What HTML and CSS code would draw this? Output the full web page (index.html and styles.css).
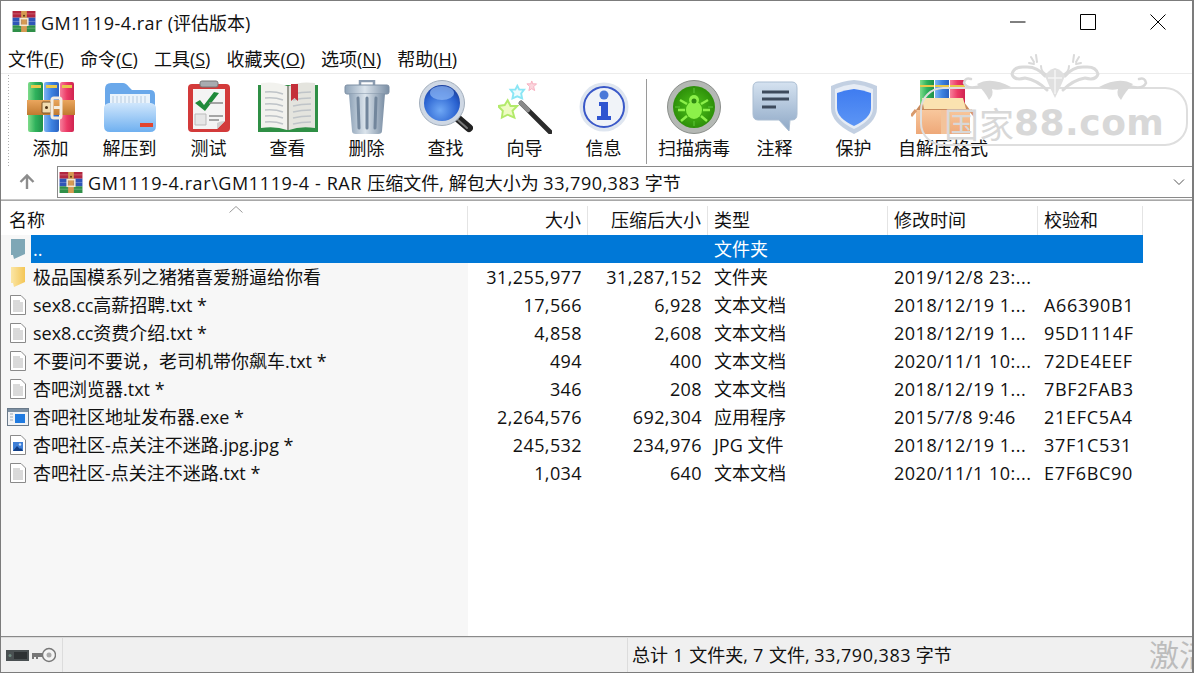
FILE: index.html
```html
<!DOCTYPE html>
<html lang="zh-CN">
<head>
    <meta charset="UTF-8">
    <title>GM1119-4.rar (评估版本)</title>
    <link rel="stylesheet" href="styles.css">
</head>
<body>
<svg class="icon-defs" xmlns="http://www.w3.org/2000/svg">
    <defs>
        <linearGradient id="g-green" x1="0" x2="1" y1="0" y2="0"><stop offset="0" stop-color="#7fdc8a"/><stop offset=".5" stop-color="#2fb25c"/><stop offset="1" stop-color="#1f8f48"/></linearGradient>
        <linearGradient id="g-blue" x1="0" x2="1" y1="0" y2="0"><stop offset="0" stop-color="#7fb4f2"/><stop offset=".5" stop-color="#3d83e2"/><stop offset="1" stop-color="#2a62c0"/></linearGradient>
        <linearGradient id="g-red" x1="0" x2="1" y1="0" y2="0"><stop offset="0" stop-color="#f67f9b"/><stop offset=".5" stop-color="#ec3a66"/><stop offset="1" stop-color="#cf2450"/></linearGradient>
        <linearGradient id="g-belt" x1="0" x2="0" y1="0" y2="1"><stop offset="0" stop-color="#eaa65e"/><stop offset="1" stop-color="#c07a30"/></linearGradient>
        <linearGradient id="g-folder" x1="0" x2="0" y1="0" y2="1"><stop offset="0" stop-color="#cfe6fc"/><stop offset="1" stop-color="#6fb0f0"/></linearGradient>
        <linearGradient id="g-steel" x1="0" x2="1" y1="0" y2="0"><stop offset="0" stop-color="#8fa3b8"/><stop offset=".45" stop-color="#dbe4ec"/><stop offset="1" stop-color="#7a8ea4"/></linearGradient>
        <radialGradient id="g-lens" cx=".45" cy=".7" r=".7"><stop offset="0" stop-color="#6fa8f5"/><stop offset=".7" stop-color="#2a62d0"/><stop offset="1" stop-color="#1b3f9c"/></radialGradient>
        <radialGradient id="g-bug" cx=".5" cy=".5" r=".55"><stop offset="0" stop-color="#4ec41a"/><stop offset="1" stop-color="#2a8a08"/></radialGradient>
        <linearGradient id="g-bubble" x1="0" x2="0" y1="0" y2="1"><stop offset="0" stop-color="#d5e2f0"/><stop offset="1" stop-color="#8ea8c6"/></linearGradient>
        <linearGradient id="g-shield" x1="0" x2="0" y1="0" y2="1"><stop offset="0" stop-color="#3f7cf0"/><stop offset="1" stop-color="#5c95f5"/></linearGradient>
        <linearGradient id="g-box" x1="0" x2="0" y1="0" y2="1"><stop offset="0" stop-color="#f8c79c"/><stop offset="1" stop-color="#eea878"/></linearGradient>
        <linearGradient id="g-yfolder" x1="0" x2="1" y1="0" y2="0"><stop offset="0" stop-color="#fbe6a6"/><stop offset="1" stop-color="#f4c656"/></linearGradient>
    </defs>
    <symbol id="ico-rar" viewBox="0 0 48 52">
        <rect x="1" y="1" width="15" height="50" rx="2" fill="url(#g-green)"/>
        <rect x="17" y="1" width="15" height="50" rx="2" fill="url(#g-blue)"/>
        <rect x="33" y="1" width="14" height="50" rx="2" fill="url(#g-red)"/>
        <path d="M4 4h10v3H4zM19 4h11v3H19zM35 4h10v3H35z" fill="#e9c84a"/>
        <rect x="0" y="19" width="48" height="15" fill="url(#g-belt)"/>
        <rect x="15" y="21" width="9" height="11" rx="1" fill="#f2dcb0" stroke="#7a5226"/>
        <circle cx="19.500" cy="26.500" r="1.500" fill="#4a2f12"/>
        <rect x="25" y="17" width="9" height="20" rx="2" fill="none" stroke="#f4ece0" stroke-width="3"/>
        <rect x="27" y="25" width="6" height="3" fill="#f4ece0"/>
    </symbol>
    <symbol id="ico-rar-small" viewBox="0 0 24 22">
        <rect y="0" width="24" height="7" fill="#b3263f"/>
        <rect y="7" width="24" height="8" fill="#2f55b8"/>
        <rect y="15" width="24" height="7" fill="#2f8f48"/>
        <path d="M0 3h24M0 11h24M0 18h24" stroke="#fff" stroke-opacity=".25"/>
        <rect x="9" y="0" width="6" height="22" fill="#d69a52"/>
        <rect x="8" y="8" width="8" height="7" fill="none" stroke="#f4e8d2" stroke-width="1.600"/>
        <circle cx="12" cy="5" r="1" fill="#4a2f12"/>
    </symbol>
    <symbol id="ico-extract" viewBox="0 0 54 52">
        <path d="M2 8q0-6 6-6h12q3 0 6 4l3 3h18q5 0 5 5v30H2z" fill="#6aa8ea"/>
        <rect x="7" y="13" width="40" height="20" fill="#eaf3fb"/>
        <path d="M10 15v8M14 15v8M18 15v8M22 15v8M26 15v8M30 15v8M34 15v8M38 15v8M42 15v8" stroke="#b6cbe0"/>
        <path d="M1 27q0-4 5-5h42q5 1 5 5v18q0 6-6 6H7q-6 0-6-6z" fill="url(#g-folder)"/>
        <rect x="37" y="42" width="13" height="4" fill="#e2452e"/>
    </symbol>
    <symbol id="ico-test" viewBox="0 0 44 52">
        <rect x="1" y="3" width="42" height="48" rx="4" fill="#d33a3a"/>
        <path d="M6 8h32v32l-8 8H6z" fill="#f4f4f4"/>
        <path d="M30 48l8-8q-5 0-8 2z" fill="#cfcfcf"/>
        <rect x="13" y="0" width="18" height="6" rx="2" fill="#a8acb0" stroke="#777"/>
        <path d="M8 22l5-3 4 5 10-13 5 1-14 18z" fill="#1f8a3a"/>
        <path d="M8 33h11v11H8z" fill="#e6e6e6" stroke="#bbb"/>
        <path d="M22 22h14M22 35h14M22 39h10" stroke="#8a8a8a" stroke-width="1.5"/>
    </symbol>
    <symbol id="ico-view" viewBox="0 0 60 50">
        <path d="M0 3h60v47H0z" fill="#2f8f45"/>
        <path d="M3 1q15-2 26 3v44Q18 44 3 46z" fill="#f2f2ee"/>
        <path d="M57 1q-15-2-26 3v44q11-4 26-2z" fill="#e4e4de"/>
        <path d="M29 4h2v44h-2z" fill="#9a9a92"/>
        <path d="M7 10q10-1 18 2M7 16q10-1 18 2M7 22q10-1 18 2M7 28q10-1 18 2M7 34q10-1 18 2M7 40q10-1 18 2M35 12q8-2 18-2M35 18q8-2 18-2M35 24q8-2 18-2M35 30q8-2 18-2M35 36q8-2 18-2M35 42q8-2 18-2" fill="none" stroke="#bfc4c8" stroke-width="1.6"/>
        <path d="M33 2h7v17l-3.500-3-3.500 3z" fill="#c42f3a"/>
    </symbol>
    <symbol id="ico-trash" viewBox="0 0 46 54">
        <path d="M16 5V1h14v4" fill="none" stroke="#8b9cb0" stroke-width="2.500"/>
        <rect x="1" y="5" width="44" height="9" rx="2" fill="url(#g-steel)" stroke="#7d8fa3"/>
        <path d="M5 14h36l-3 37q0 3-4 3H12q-4 0-4-3z" fill="url(#g-steel)"/>
        <path d="M14 18l1 30M23 18v30M32 18l-1 30" stroke="#72869c" stroke-width="3" stroke-linecap="round"/>
    </symbol>
    <symbol id="ico-find" viewBox="0 0 54 54">
        <path d="M36 36l14 12" stroke="#222" stroke-width="8" stroke-linecap="round"/>
        <path d="M39 40l9 8" stroke="#777" stroke-width="2" stroke-linecap="round"/>
        <circle cx="23" cy="23" r="22.500" fill="#cfd8e4" stroke="#a2aebc"/>
        <circle cx="23" cy="23" r="18" fill="url(#g-lens)"/>
        <ellipse cx="23" cy="13" rx="12" ry="7" fill="#8fb8f5" opacity=".7"/>
    </symbol>
    <symbol id="ico-wizard" viewBox="0 0 56 56">
        <path d="M24 24l30 30" stroke="#2b2b2b" stroke-width="5" stroke-linecap="round"/>
        <path d="M24 24l7 7" stroke="#8a8a8a" stroke-width="5" stroke-linecap="round"/>
        <path d="M10 21l3 6 7 0-5 5 2 7-7-3-6 3 1-7-5-5 7-1z" fill="#eefbc4" stroke="#b2ea6a" stroke-width="2"/>
        <path d="M20 6l2 4 5 0-3 4 1 5-5-2-5 2 1-5-3-4 5 0z" fill="#eefbfd" stroke="#8be6f5" stroke-width="2"/>
        <path d="M35 1l1 3 4 0-3 3 1 4-3-2-3 2 1-4-3-3 4 0z" fill="#fbd6dd" stroke="#f7b0bf"/>
    </symbol>
    <symbol id="ico-info" viewBox="0 0 50 50">
        <circle cx="25" cy="25" r="24.500" fill="#dfe6f0"/>
        <circle cx="25" cy="25" r="20" fill="#f0f3f8" stroke="#3a58c8" stroke-width="2"/>
        <circle cx="25" cy="13" r="4.500" fill="#4a78d8"/>
        <path d="M20 20h9v14h3v4H18v-4h4V24h-2z" fill="#2f55d0"/>
    </symbol>
    <symbol id="ico-scan" viewBox="0 0 54 54">
        <circle cx="27" cy="27" r="26.500" fill="#b4b8b4" stroke="#8a8e8a"/>
        <circle cx="27" cy="27" r="21" fill="url(#g-bug)"/>
        <path d="M27 8v5M27 41v5M8 27h5M41 27h5" stroke="#5fc83a"/>
        <circle cx="27" cy="20" r="5" fill="#8cf04a"/>
        <ellipse cx="27" cy="30" rx="8" ry="9" fill="#8cf04a"/>
        <path d="M20 24l-7-4M34 24l7-4M18 30h-7M36 30h7M20 36l-6 5M34 36l6 5" stroke="#8cf04a" stroke-width="2.500"/>
        <circle cx="27" cy="21" r="2.500" fill="#2f8a12"/>
    </symbol>
    <symbol id="ico-comment" viewBox="0 0 46 52">
        <path d="M6 1h34q5 0 5 6v26q0 6-5 6h-2l-1 11-10-11H6q-5 0-5-6V7q0-6 5-6z" fill="url(#g-bubble)" stroke="#aabdd2"/>
        <path d="M10 11h27M10 18h27M10 26h14" stroke="#3d4a5c" stroke-width="3"/>
    </symbol>
    <symbol id="ico-shield" viewBox="0 0 46 54">
        <path d="M23 0q12 1 23 6v22q0 15-23 26Q0 43 0 28V6Q11 1 23 0z" fill="#c3d0e2"/>
        <path d="M23 4q10 1 19 5v19q0 12-19 21Q4 40 4 28V9q9-4 19-5z" fill="#e6ecf5"/>
        <path d="M23 9q9 1 17 4v15q0 10-17 18Q6 38 6 28V13q8-3 17-4z" fill="url(#g-shield)"/>
    </symbol>
    <symbol id="ico-sfx" viewBox="0 0 64 54">
        <rect x="9" y="0" width="14" height="26" fill="url(#g-green)"/>
        <rect x="24" y="0" width="14" height="26" fill="url(#g-blue)"/>
        <rect x="39" y="0" width="15" height="26" fill="url(#g-red)"/>
        <path d="M9 5h14v2H9zM24 5h14v2H24zM39 5h15v2H39z" fill="#e9c84a"/>
        <path d="M5 30L14 18h36l9 12z" fill="#c98a5c"/>
        <path d="M11 18h41l3 11H13z" fill="#fae2b0"/>
        <path d="M5 30h54v24H5z" fill="url(#g-box)"/>
        <path d="M5 30L0 36M59 30l5 6" stroke="#d99a6c" stroke-width="3"/>
        <path d="M30 30h8v24h-8z" fill="#f3c39a"/>
    </symbol>
    <symbol id="ico-folder" viewBox="0 0 16 20">
        <path d="M1 0h14v15L4 20l-1-4H1z" fill="currentColor"/>
    </symbol>
    <symbol id="ico-folder-y" viewBox="0 0 16 20">
        <path d="M1 0h14v15L4 20l-1-4H1z" fill="url(#g-yfolder)"/>
    </symbol>
    <symbol id="ico-file" viewBox="0 0 16 20">
        <path d="M.5.500h10.500l4.500 4.500v14.500H.5z" fill="#fff" stroke="#8a8a8a"/>
        <path d="M3 6h7M3 8h10M3 10h10M3 12h10M3 14h10M3 16h10" stroke="#b4b4b4"/>
    </symbol>
    <symbol id="ico-exe" viewBox="0 0 22 18">
        <rect x=".5" y=".5" width="21" height="17" fill="#f0f2f5" stroke="#6a7a8a"/>
        <rect x="1" y="1" width="20" height="3" fill="#7c8fa2"/>
        <path d="M3 6h3M3 9h3M3 12h3" stroke="#9aa8b6"/>
        <rect x="8" y="6" width="10" height="9" fill="#1f7ae0"/>
    </symbol>
    <symbol id="ico-jpg" viewBox="0 0 16 20">
        <path d="M.5.500h10.500l4.500 4.500v14.500H.5z" fill="#fff" stroke="#8a8a8a"/>
        <rect x="3" y="7" width="10" height="9" fill="#3f7fd6"/>
        <path d="M3 16l4-5 3 3 1-1 2 3z" fill="#123f86"/>
        <circle cx="10" cy="9.500" r="1.200" fill="#cfe4fb"/>
    </symbol>
</svg>

<div class="window">
    <header class="titlebar">
        <svg class="title-icon"><use href="#ico-rar-small"/></svg>
        <span class="title-text"><span class="wide">GM1119-4.rar</span> (评估版本)</span>
        <div class="window-controls">
            <svg class="ctl" viewBox="0 0 16 16"><path d="M0 8h15.500" stroke="#000" fill="none"/></svg>
            <svg class="ctl" viewBox="0 0 16 16"><path d="M.5.500h15v15H.5z" stroke="#000" fill="none"/></svg>
            <svg class="ctl" viewBox="0 0 16 16"><path d="M.5.500l15 15M15.500.500l-15 15" stroke="#000" fill="none"/></svg>
        </div>
    </header>

    <nav class="menubar">
        <span>文件(<u>F</u>)</span>
        <span>命令(<u>C</u>)</span>
        <span>工具(<u>S</u>)</span>
        <span>收藏夹(<u>O</u>)</span>
        <span>选项(<u>N</u>)</span>
        <span>帮助(<u>H</u>)</span>
    </nav>

    <div class="toolbar">
        <div class="tool"><svg class="tool-icon w48"><use href="#ico-rar"/></svg>添加</div>
        <div class="tool"><svg class="tool-icon w54"><use href="#ico-extract"/></svg>解压到</div>
        <div class="tool"><svg class="tool-icon w44"><use href="#ico-test"/></svg>测试</div>
        <div class="tool"><svg class="tool-icon w60"><use href="#ico-view"/></svg>查看</div>
        <div class="tool"><svg class="tool-icon w46"><use href="#ico-trash"/></svg>删除</div>
        <div class="tool"><svg class="tool-icon w54"><use href="#ico-find"/></svg>查找</div>
        <div class="tool"><svg class="tool-icon w54"><use href="#ico-wizard"/></svg>向导</div>
        <div class="tool"><svg class="tool-icon w50"><use href="#ico-info"/></svg>信息</div>
        <div class="tool-sep"></div>
        <div class="tool tool-scan"><svg class="tool-icon w54"><use href="#ico-scan"/></svg>扫描病毒</div>
        <div class="tool"><svg class="tool-icon w46"><use href="#ico-comment"/></svg>注释</div>
        <div class="tool"><svg class="tool-icon w46"><use href="#ico-shield"/></svg>保护</div>
        <div class="tool tool-wide"><svg class="tool-icon w64"><use href="#ico-sfx"/></svg>自解压格式</div>
    </div>

    <div class="addressbar">
        <svg class="up-arrow" viewBox="0 0 18 18"><path d="M9 16V3M2.500 9L9 2.500 15.500 9" fill="none" stroke="#8c8c8c" stroke-width="2.400"/></svg>
        <div class="address-box">
            <svg class="title-icon"><use href="#ico-rar-small"/></svg>
            <span class="address-text"><span class="wider">GM1119-4.rar\GM1119-4 - RAR </span>压缩文件, 解包大小为 <span class="wide">33,790,383</span> 字节</span>
            <svg class="address-drop" viewBox="0 0 12 8"><path d="M1 1.500l5 5 5-5" fill="none" stroke="#555"/></svg>
        </div>
    </div>

    <main class="list">
        <div class="row head">
            <div class="cell name">名称<svg class="sort-caret" viewBox="0 0 14 7"><path d="M.5 6.500L7 .5l6.500 6" fill="none" stroke="#9a9a9a"/></svg></div>
            <div class="cell align-right">大小</div>
            <div class="cell align-right">压缩后大小</div>
            <div class="cell">类型</div>
            <div class="cell">修改时间</div>
            <div class="cell">校验和</div>
        </div>
        <div class="row selected">
            <div class="cell name"><svg class="file-icon up-folder"><use href="#ico-folder"/></svg><span class="label">..</span></div>
            <div class="cell num"></div><div class="cell num"></div>
            <div class="cell">文件夹</div><div class="cell"></div><div class="cell"></div>
        </div>
        <div class="row">
            <div class="cell name"><svg class="file-icon"><use href="#ico-folder-y"/></svg><span class="label">极品国模系列之猪猪喜爱掰逼给你看</span></div>
            <div class="cell num">31,255,977</div><div class="cell num">31,287,152</div>
            <div class="cell">文件夹</div><div class="cell date">2019/12/8 23:...</div><div class="cell"></div>
        </div>
        <div class="row">
            <div class="cell name"><svg class="file-icon"><use href="#ico-file"/></svg><span class="label">sex8.cc高薪招聘.txt *</span></div>
            <div class="cell num">17,566</div><div class="cell num">6,928</div>
            <div class="cell">文本文档</div><div class="cell date">2018/12/19 1...</div><div class="cell crc">A66390B1</div>
        </div>
        <div class="row">
            <div class="cell name"><svg class="file-icon"><use href="#ico-file"/></svg><span class="label">sex8.cc资费介绍.txt *</span></div>
            <div class="cell num">4,858</div><div class="cell num">2,608</div>
            <div class="cell">文本文档</div><div class="cell date">2018/12/19 1...</div><div class="cell crc">95D1114F</div>
        </div>
        <div class="row">
            <div class="cell name"><svg class="file-icon"><use href="#ico-file"/></svg><span class="label">不要问不要说，老司机带你飙车.txt *</span></div>
            <div class="cell num">494</div><div class="cell num">400</div>
            <div class="cell">文本文档</div><div class="cell date">2020/11/1 10:...</div><div class="cell crc">72DE4EEF</div>
        </div>
        <div class="row">
            <div class="cell name"><svg class="file-icon"><use href="#ico-file"/></svg><span class="label">杏吧浏览器.txt *</span></div>
            <div class="cell num">346</div><div class="cell num">208</div>
            <div class="cell">文本文档</div><div class="cell date">2018/12/19 1...</div><div class="cell crc">7BF2FAB3</div>
        </div>
        <div class="row">
            <div class="cell name"><svg class="file-icon exe"><use href="#ico-exe"/></svg><span class="label">杏吧社区地址发布器.exe *</span></div>
            <div class="cell num">2,264,576</div><div class="cell num">692,304</div>
            <div class="cell">应用程序</div><div class="cell date">2015/7/8 9:46</div><div class="cell crc">21EFC5A4</div>
        </div>
        <div class="row">
            <div class="cell name"><svg class="file-icon"><use href="#ico-jpg"/></svg><span class="label">杏吧社区-点关注不迷路.jpg.jpg *</span></div>
            <div class="cell num">245,532</div><div class="cell num">234,976</div>
            <div class="cell">JPG 文件</div><div class="cell date">2018/12/19 1...</div><div class="cell crc">37F1C531</div>
        </div>
        <div class="row">
            <div class="cell name"><svg class="file-icon"><use href="#ico-file"/></svg><span class="label">杏吧社区-点关注不迷路.txt *</span></div>
            <div class="cell num">1,034</div><div class="cell num">640</div>
            <div class="cell">文本文档</div><div class="cell date">2020/11/1 10:...</div><div class="cell crc">E7F6BC90</div>
        </div>
    </main>

    <footer class="statusbar">
        <div class="status-icons">
            <svg class="status-drive" viewBox="0 0 23 11"><rect width="23" height="11" fill="#4a5052"/><rect x="8" y="2" width="13" height="7" fill="#2e3234"/><circle cx="4" cy="5.500" r="1.500" fill="#6f8a80"/></svg>
            <svg class="status-key" viewBox="0 0 24 16"><circle cx="17" cy="8" r="6.500" fill="#f4f4f4" stroke="#777" stroke-width="1.400"/><circle cx="17" cy="8" r="2.500" fill="#aaa"/><path d="M0 6h11v4H6v2H4v-2H2v2H0z" fill="#777"/></svg>
        </div>
        <div class="status-fill"></div>
        <div class="status-text">总计<span class="wide"> 1 </span>文件夹,<span class="wide"> 7 </span>文件, <span class="wide">33,790,383</span> 字节</div>
    </footer>

    <!-- watermark stamps from the capture, lying over the window -->
    <div class="stamp">
        <svg class="stamp-art" viewBox="0 0 270 92">
            <rect x="2" y="34" width="266" height="57" rx="22" fill="none" stroke="#dedede" stroke-width="2"/>
            <g id="stamp-half">
                <path d="M58 30Q72 22 92 33Q80 37 73 35Q75 41 70 46Q66 38 58 30z" fill="#d8d8d8"/>
                <path d="M62 32Q48 36 45 29Q46 23 52 25" fill="none" stroke="#d8d8d8" stroke-width="2.500" stroke-linecap="round"/>
                <path d="M126 22Q118 12 106 13Q95 12 93 20Q95 27 106 24Q118 26 128 36" fill="none" stroke="#dadada" stroke-width="3" stroke-linecap="round"/>
                <path d="M112 3l3 5M117 1l1 7M110 9l5 1M122 12q0 6 6 9" fill="none" stroke="#dadada" stroke-width="2" stroke-linecap="round"/>
            </g>
            <use href="#stamp-half" transform="translate(272 0) scale(-1 1)"/>
            <path d="M136 14q-7 2-10 8 4 10 10 22 6-12 10-22-3-6-10-8z" fill="#e0e0e0"/>
            <path d="M136 16v24M129 24h14" stroke="#f4f4f4" stroke-width="1.500"/>
        </svg>
        <div class="stamp-text"><span class="stamp-cn">国家</span><span class="stamp-en">88.com</span></div>
    </div>
    <div class="activate">激活</div>
</div>
</body>
</html>
```
FILE: styles.css
```css
* {
    box-sizing: border-box;
}
html, body {
    margin: 0;
    height: 100%;
    overflow: hidden;
}
body {
    font-family: "Open Sans", "Noto Sans CJK SC", sans-serif;
    font-size: 18px;
    color: #111;
    background: #fff;
}
.icon-defs {
    display: block;
    width: 0;
    height: 0;
}
.wide {
    letter-spacing: 0.5px;
}
.wider {
    letter-spacing: 0.6px;
}
.window {
    position: relative;
    display: flex;
    flex-direction: column;
    height: 673px;
    border: 1px solid #7c7c7c;
    border-right-width: 2px;
    overflow: hidden;
    background: #fff;
}

/* title bar */
.titlebar {
    display: flex;
    align-items: center;
    height: 44px;
    padding-left: 11px;
    padding-bottom: 3px;
    flex: none;
}
.title-icon {
    width: 24px;
    height: 21px;
    flex: none;
}
.title-text {
    margin-left: 5px;
}
.window-controls {
    margin-left: auto;
    margin-right: -1px;
    display: flex;
}
.ctl {
    width: 16px;
    height: 16px;
    margin: 0 27px;
}

/* menu */
.menubar {
    display: flex;
    gap: 16px;
    height: 29px;
    padding-left: 7px;
    padding-bottom: 2px;
    align-items: center;
    flex: none;
    border-bottom: 1px solid #ececec;
}

/* toolbar */
.toolbar {
    display: flex;
    height: 92px;
    padding-left: 8px;
    flex: none;
    border-left: 2px dotted transparent;
    background-image: radial-gradient(circle, #b0b0b0 1px, transparent 1px);
    background-size: 3px 3px;
    background-position: 4px 0;
    background-repeat: repeat-y;
    background-color: #fff;
}
.tool {
    width: 79px;
    display: flex;
    flex-direction: column;
    align-items: center;
    justify-content: flex-end;
    line-height: 24px;
    padding-bottom: 6px;
    white-space: nowrap;
}
.tool-scan {
    width: 82px;
}
.tool-wide {
    width: 100px;
}
.tool-icon {
    height: 54px;
    margin-bottom: 2px;
}
.w44 { width: 44px; }
.w46 { width: 46px; }
.w48 { width: 48px; }
.w50 { width: 50px; }
.w54 { width: 54px; }
.w60 { width: 60px; }
.w64 { width: 64px; }
.tool-sep {
    width: 1px;
    margin: 5px 6px 2px 3px;
    background: #9a9a9a;
}

/* address row */
.addressbar {
    display: flex;
    height: 34px;
    flex: none;
    align-items: stretch;
    border-bottom: 1px solid #c8c8c8;
    padding-bottom: 2px;
}
.up-arrow {
    width: 18px;
    height: 18px;
    margin: 7px 0 0 17px;
    flex: none;
}
.address-box {
    display: flex;
    align-items: center;
    flex: 1;
    margin-left: 21px;
    padding-left: 1px;
    border: 1px solid #8a8a8a;
    border-right: none;
    height: 32px;
}
.address-text {
    margin-left: 5px;
    white-space: pre;
}
.address-drop {
    width: 12px;
    height: 8px;
    margin-left: auto;
    margin-right: 7px;
}

/* file list */
.list {
    flex: 1;
    min-height: 0;
    background: linear-gradient(to right, #f7f7f7 467px, #fff 467px);
    border-bottom: 1px solid #8a8a8a;
}
.row {
    display: grid;
    grid-template-columns: 467px 120px 120px 180px 150px 105px;
    height: 28px;
    line-height: 28px;
}
.head {
    height: 35px;
    line-height: 28px;
    background: #fff;
    padding-top: 5px;
    border-top: 1px solid #a8a8a8;
}
.head .cell {
    border-right: 1px solid #e4e4e4;
}
.cell {
    padding: 0 6px;
    white-space: nowrap;
    overflow: hidden;
}
.head .name {
    position: relative;
    padding-left: 8px;
}
.sort-caret {
    position: absolute;
    left: 228px;
    top: 0;
    width: 14px;
    height: 7px;
}
.align-right {
    text-align: right;
}
.num {
    text-align: right;
    letter-spacing: 0.4px;
}
.date {
    letter-spacing: 0.5px;
}
.crc {
    letter-spacing: 0.7px;
}
.row:not(.head) .name {
    display: flex;
    align-items: center;
    padding: 0 0 0 9px;
}
.file-icon {
    width: 16px;
    height: 20px;
    flex: none;
    margin-right: 5px;
}
.file-icon.exe {
    width: 22px;
    height: 18px;
    margin-left: -3px;
    margin-right: 2px;
}
.up-folder {
    color: #7fa7b6;
}
.label {
    flex: 1;
    padding-left: 2px;
}
.selected .cell:not(.name),
.selected .label {
    background: #0078d7;
    color: #fff;
}

/* status bar */
.statusbar {
    display: flex;
    height: 35px;
    flex: none;
    background: #f0f0f0;
    border-top: 1px solid #dcdcdc;
    align-items: stretch;
}
.status-icons {
    width: 62px;
    display: flex;
    align-items: center;
    padding-left: 5px;
    gap: 3px;
    border-right: 1px solid #dcdcdc;
}
.status-drive {
    width: 23px;
    height: 11px;
}
.status-key {
    width: 24px;
    height: 16px;
}
.status-fill {
    width: 565px;
    border-right: 1px solid #dcdcdc;
}
.status-text {
    padding-left: 4px;
    line-height: 34px;
    white-space: pre;
}

/* watermarks */
.stamp {
    position: absolute;
    left: 918px;
    top: 53px;
    width: 270px;
    height: 92px;
    pointer-events: none;
}
.stamp-art {
    display: block;
    width: 270px;
    height: 92px;
}
.stamp-text {
    position: absolute;
    left: 25px;
    top: 45px;
    display: flex;
    align-items: center;
    color: #d8d8d8;
    height: 46px;
    white-space: nowrap;
}
.stamp-cn {
    font-size: 35px;
}
.stamp-en {
    font-family: "DejaVu Sans", sans-serif;
    font-weight: 700;
    font-size: 36px;
    letter-spacing: 0.5px;
}
.activate {
    position: absolute;
    left: 1148px;
    top: 636px;
    font-size: 30px;
    line-height: 36px;
    width: 43px;
    height: 35px;
    overflow: hidden;
    white-space: nowrap;
    color: #bcbcbc;
}
```
